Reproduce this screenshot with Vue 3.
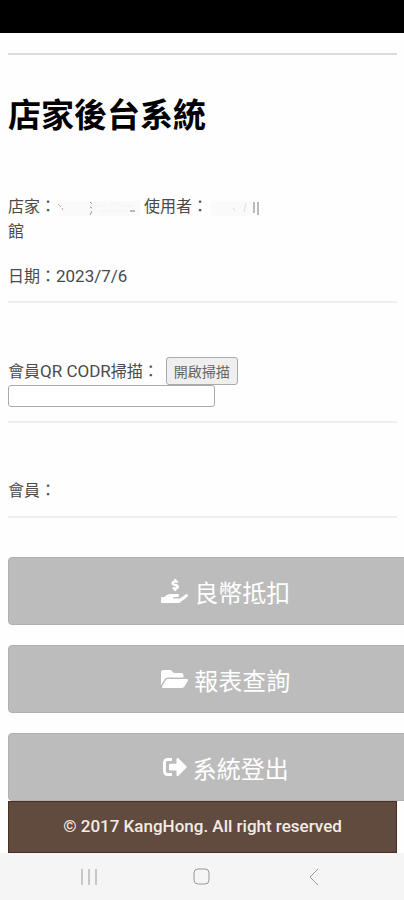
<template>
  <div class="screen">
    <div class="status-bar"></div>

    <main class="content">
      <hr class="line line-top" />
      <h1>店家後台系統</h1>

      <section class="info">
        <p>
          店家：<svg class="masked masked-store" viewBox="0 0 88 18" aria-hidden="true">
            <rect x="4" y="2" width="80" height="15" fill="#fafafa" />
            <path d="M2 5l3 3M6 9l1 2" stroke="#aaa" fill="none" />
            <path d="M34 3l2 2M34 8l2 1M36 12l-2 4" stroke="#999" fill="none" />
            <path d="M42 7h8M54 5h8M66 7h10M44 12h28" stroke="#f2f2f2" fill="none" />
            <path d="M74 12h5" stroke="#777" fill="none" />
          </svg>使用者：<svg class="masked masked-user" viewBox="0 0 54 18" aria-hidden="true">
            <rect x="3" y="2" width="42" height="15" fill="#fafafa" />
            <path d="M25 9l2 3M38 4l-2 9" stroke="#ddd" fill="none" />
            <path d="M46 3v11M50 3v13" stroke="#777" fill="none" />
          </svg><br />館
        </p>
        <p>日期：<span class="latin">{{ date }}</span></p>
      </section>
      <hr class="line" />

      <section class="scan">
        <div class="scan-row">
          <label for="member-code">會員<span class="latin">QR CODR</span>掃描：</label>
          <button class="btn-scan" type="button">開啟掃描</button>
        </div>
        <input id="member-code" class="input" type="text" v-model="code" />
      </section>
      <hr class="line" />

      <p class="member">會員：</p>
      <hr class="line" />

      <nav class="menu">
        <button v-for="item in menu" :key="item.title" class="btn-menu" type="button">
          <svg class="icon" :viewBox="item.viewBox" aria-hidden="true">
            <path :d="item.path" fill="currentColor" />
          </svg>
          <span>{{ item.title }}</span>
        </button>
      </nav>

      <footer class="footer">© 2017 KangHong. All right reserved</footer>
    </main>

    <div class="system-bar">
      <button type="button" aria-label="Recents">
        <svg viewBox="0 0 18 18"><path d="M2 1v16M9 1v16M16 1v16" /></svg>
      </button>
      <button type="button" aria-label="Home">
        <svg viewBox="0 0 18 18"><rect x="1" y="1" width="15" height="15" rx="4" /></svg>
      </button>
      <button type="button" aria-label="Back">
        <svg viewBox="0 0 18 18"><path d="M12 1L4 9l8 8" /></svg>
      </button>
    </div>
  </div>
</template>

<script setup>
import { ref } from 'vue'

const date = '2023/7/6'
const code = ref('')

const menu = [
  {
    title: '良幣抵扣',
    viewBox: '0 0 576 512',
    path: 'M271.06,144.3l54.27,14.3a8.59,8.59,0,0,1,6.63,8.1c0,4.6-4.09,8.4-9.12,8.4h-35.6a30,30,0,0,1-11.19-2.2c-5.24-2.2-11.28-1.7-15.3,2l-19,17.5a11.68,11.68,0,0,0-2.25,2.66,11.42,11.42,0,0,0,3.88,15.74,83.77,83.77,0,0,0,34.51,11.5V240c0,8.8,7.83,16,17.37,16h17.37c9.55,0,17.38-7.2,17.38-16V222.4c32.93-3.6,57.84-31,53.5-63-3.15-23-22.46-41.3-46.56-47.7L282.68,97.4a8.59,8.59,0,0,1-6.63-8.1c0-4.6,4.09-8.4,9.12-8.4h35.6A30,30,0,0,1,332,83.1c5.23,2.2,11.28,1.7,15.3-2l19-17.5A11.31,11.31,0,0,0,368.47,61a11.43,11.43,0,0,0-3.84-15.78,83.82,83.82,0,0,0-34.52-11.5V16c0-8.8-7.82-16-17.37-16H295.37C285.82,0,278,7.2,278,16V33.6c-32.89,3.6-57.85,31-53.51,63C227.63,119.6,247,137.9,271.06,144.3ZM565.27,328.1c-11.8-10.7-30.2-10-42.6,0L430.27,402a63.64,63.64,0,0,1-40,14H272a16,16,0,0,1,0-32h78.29c15.9,0,30.71-10.9,33.25-26.6a31.2,31.2,0,0,0,.46-5.46A32,32,0,0,0,352,320H192a117.66,117.66,0,0,0-74.1,26.29L71.4,384H16A16,16,0,0,0,0,400v96a16,16,0,0,0,16,16H372.77a64,64,0,0,0,40-14L564,377a32,32,0,0,0,1.28-48.9Z'
  },
  {
    title: '報表查詢',
    viewBox: '0 0 576 512',
    path: 'M572.694 292.093L500.27 416.248A63.997 63.997 0 0 1 444.989 448H45.025c-18.523 0-30.064-20.093-20.731-36.093l72.424-124.155A64 64 0 0 1 152 256h399.964c18.523 0 30.064 20.093 20.73 36.093zM152 224h328v-48c0-26.51-21.49-48-48-48H272l-64-64H48C21.49 64 0 85.49 0 112v278.046l69.077-118.418C86.214 242.25 117.989 224 152 224z'
  },
  {
    title: '系統登出',
    viewBox: '0 0 512 512',
    path: 'M497 273L329 441c-15 15-41 4.5-41-17v-96H152c-13.3 0-24-10.7-24-24v-96c0-13.3 10.7-24 24-24h136V88c0-21.4 25.9-32 41-17l168 168c9.3 9.4 9.3 24.6 0 34zM192 436v-40c0-6.6-5.4-12-12-12H96c-17.7 0-32-14.3-32-32V160c0-17.7 14.3-32 32-32h84c6.6 0 12-5.4 12-12V76c0-6.6-5.4-12-12-12H96c-53 0-96 43-96 96v192c0 53 43 96 96 96h84c6.6 0 12-5.4 12-12z'
  }
]
</script>

<style>
body {
  margin: 0;
  background-color: #fefefe;
}
</style>

<style scoped>
.screen {
  display: flex;
  flex-direction: column;
  min-height: 100vh;
  overflow: hidden;
  color: #4a4a4a;
  font-family: Roboto, 'Noto Sans CJK TC', sans-serif;
  font-size: 16px;
  line-height: 25px;
}

.status-bar {
  height: 33px;
  background-color: #000;
}

.content {
  flex: 1;
  padding: 20px 7px 0 8px;
}

.line {
  height: 2px;
  margin: 0;
  border: none;
  background-color: #eee;
}

.line-top {
  background-color: #dddcd4;
}

h1 {
  margin: 41px 0 58px;
  color: #000;
  font-size: 33px;
  font-weight: 700;
  line-height: 40px;
}

p {
  margin: 0;
}

.info {
  display: flex;
  flex-direction: column;
  gap: 20px;
  padding-bottom: 12px;
}

.latin {
  font-size: 17px;
}

.masked {
  height: 18px;
  vertical-align: middle;
}

.masked-store {
  width: 88px;
}

.masked-user {
  width: 54px;
}

.scan {
  padding: 54px 0 14px;
}

.scan-row {
  display: flex;
  align-items: center;
  gap: 7px;
}

.btn-scan {
  height: 28px;
  padding: 0 7px;
  border: 1px solid #aaa;
  border-radius: 3px;
  background-color: #efefef;
  color: #666;
  font-family: inherit;
  font-size: 14px;
}

.input {
  display: block;
  box-sizing: border-box;
  width: 207px;
  height: 22px;
  border: 1px solid #aaa;
  border-radius: 3px;
  background-color: #fff;
}

.member {
  padding: 55px 0 13px;
}

/* the buttons run past the right edge of the page */
.menu {
  display: flex;
  flex-direction: column;
  gap: 20px;
  width: 112%;
  padding-top: 39px;
}

.btn-menu {
  display: flex;
  align-items: center;
  justify-content: center;
  gap: 6px;
  height: 68px;
  padding: 0;
  border: 1px solid #b0b0b0;
  border-radius: 4px;
  background-color: #bcbcbc;
  color: #fff;
  font-family: inherit;
  font-size: 24px;
}

.icon {
  height: 24px;
}

.footer {
  box-sizing: border-box;
  padding: 12px 0 13px;
  border: 1px solid #4b2d25;
  background-color: #614b3f;
  color: #f5ece4;
  font-size: 17px;
  font-weight: 500;
  text-align: center;
}

.system-bar {
  display: flex;
  justify-content: center;
  gap: 95px;
  padding: 15px 0 14px;
  background-color: #f5f5f5;
}

.system-bar button {
  display: flex;
  padding: 0;
  border: none;
  background: none;
}

.system-bar svg {
  width: 18px;
  height: 18px;
  fill: none;
  stroke: #999;
}
</style>
